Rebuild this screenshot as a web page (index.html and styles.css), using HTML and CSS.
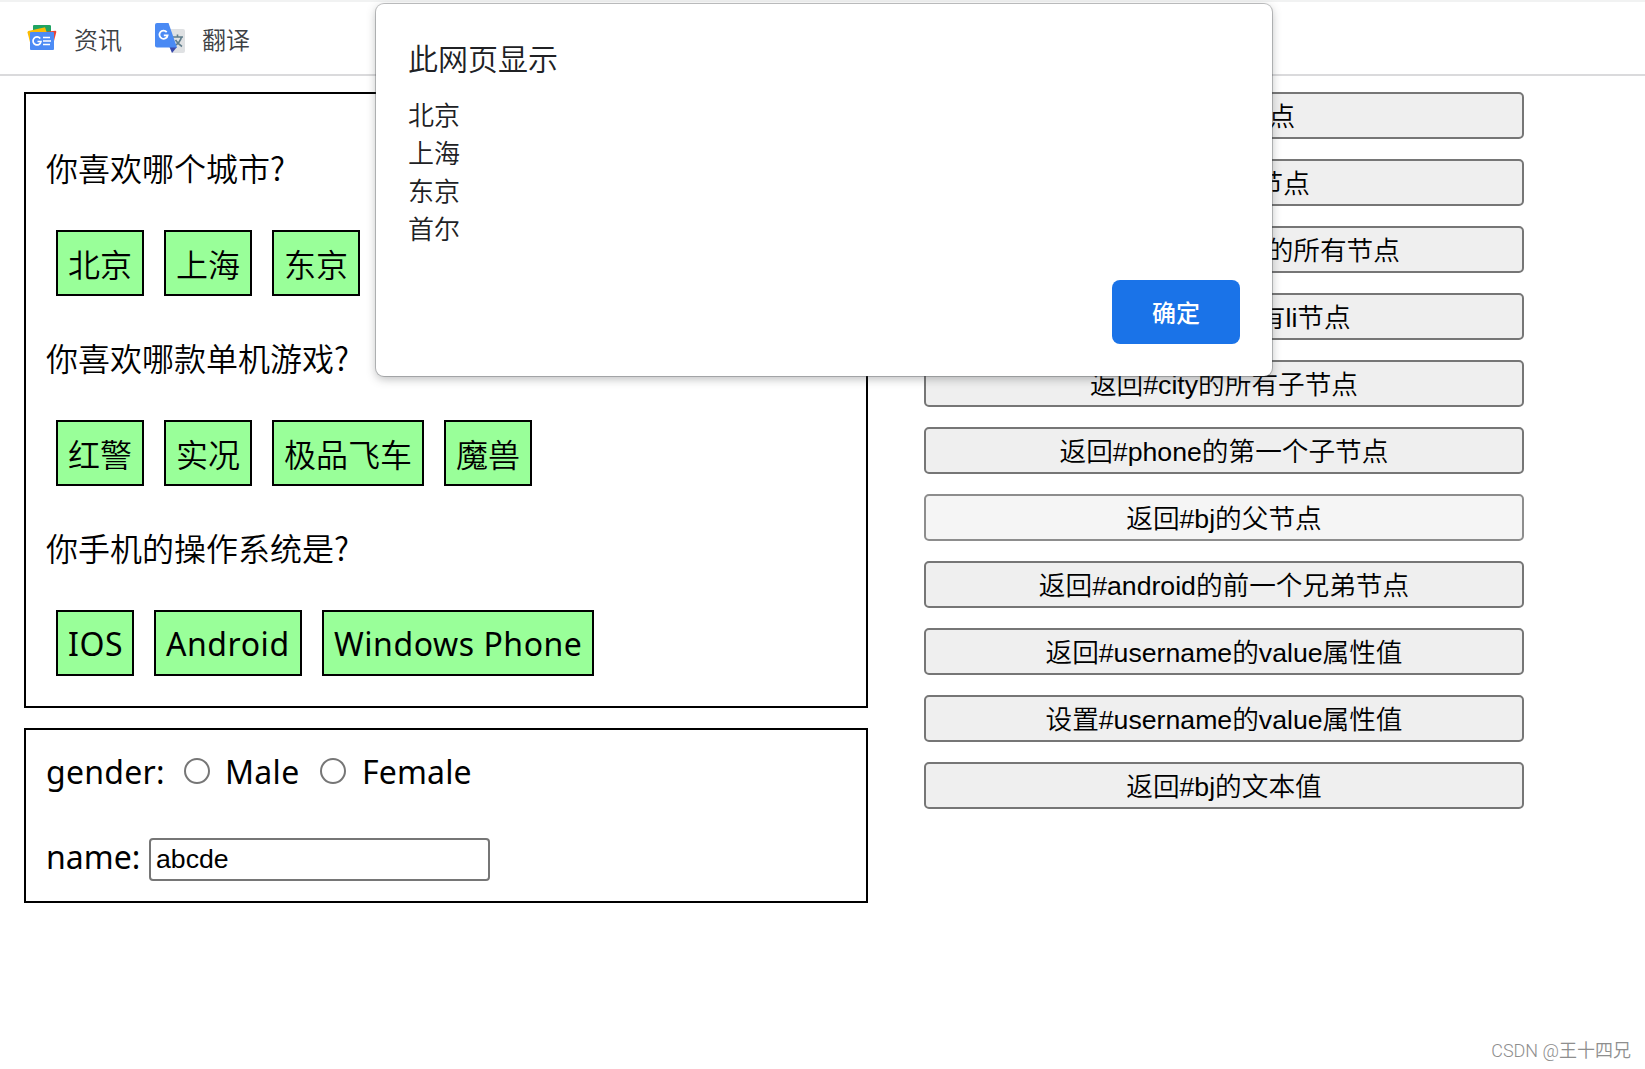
FILE: index.html
```html
<!DOCTYPE html>
<html lang="zh-CN">
<head>
<meta charset="utf-8">
<title>DOM 查询</title>
<link rel="stylesheet" href="styles.css">
</head>
<body>
<header class="bookmarks">
  <div class="bookmark">
    <svg class="icon-news" width="30" height="26" viewBox="0 0 30 26">
      <path d="M6 1Q6 0 7 0H22.500Q24 0 24 1V12H6Z" fill="#1fa463"/>
      <path d="M16 7L28.500 5.700Q29.500 6 29.300 7L26 20H16Z" fill="#ea4335"/>
      <path d="M.5 7.500Q.3 6.500 1.300 6L18 2.300 22 14 4 21Z" fill="#fbbc04"/>
      <rect x="3" y="7" width="24" height="18" rx="1" fill="#4c8bf5"/>
      <path d="M13.200 13.500A4 4 0 1 0 14 16.500H10.500" fill="none" stroke="#fff" stroke-width="1.700"/>
      <path d="M16 12.500H23M16 16H24M16 19.500H23" stroke="#fff" stroke-width="1.500"/>
    </svg>
    <span>资讯</span>
  </div>
  <div class="bookmark bookmark-translate">
    <svg class="icon-translate" width="30" height="30" viewBox="0 0 30 30">
      <path d="M12 6H28Q30 6 30 8V28Q30 30 28 30H17Z" fill="#dfe1e3"/>
      <path d="M18 14H28M22.500 11.500V14M26.500 14Q25 20 19 23M20.500 17Q23 21 27 23.500" fill="none" stroke="#607d8b" stroke-width="1.600"/>
      <path d="M14.500 24H22L17 30Z" fill="#3949ab"/>
      <path d="M2 0H13.500L22 24.500H2Q0 24.500 0 22.500V2Q0 0 2 0Z" fill="#4a8af4"/>
      <path d="M11.700 9.100A4.100 4.100 0 1 0 12.600 12.300H8.800" fill="none" stroke="#fff" stroke-width="1.800"/>
    </svg>
    <span>翻译</span>
  </div>
</header>
<main class="page">
  <div class="left">
    <section class="panel questions">
      <p class="question">你喜欢哪个城市?</p>
      <ul class="chips">
        <li>北京</li><li>上海</li><li>东京</li><li>首尔</li>
      </ul>
      <p class="question">你喜欢哪款单机游戏?</p>
      <ul class="chips">
        <li>红警</li><li>实况</li><li>极品飞车</li><li>魔兽</li>
      </ul>
      <p class="question">你手机的操作系统是?</p>
      <ul class="chips latin">
        <li class="ios">IOS</li><li class="android">Android</li><li class="winphone">Windows Phone</li>
      </ul>
    </section>
    <section class="panel form latin">
      <div class="row">
        <span class="label-gender">gender:</span>
        <input class="radio" type="radio" name="gender"><span class="label-male">Male</span>
        <input class="radio" type="radio" name="gender"><span class="label-female">Female</span>
      </div>
      <div class="row row-name">
        <span class="label-name">name:</span>
        <input class="text" type="text" value="abcde">
      </div>
    </section>
  </div>
  <div class="actions">
    <button>查找#bj节点</button>
    <button>查找所有li节点</button>
    <button>查找name=gender的所有节点</button>
    <button>查找#city下所有li节点</button>
    <button>返回#city的所有子节点</button>
    <button>返回#phone的第一个子节点</button>
    <button class="active">返回#bj的父节点</button>
    <button>返回#android的前一个兄弟节点</button>
    <button>返回#username的value属性值</button>
    <button>设置#username的value属性值</button>
    <button>返回#bj的文本值</button>
  </div>
</main>
<div class="dialog">
  <h1>此网页显示</h1>
  <div class="message">北京<br>上海<br>东京<br>首尔</div>
  <button class="confirm">确定</button>
</div>
<div class="watermark">CSDN @王十四兄</div>
</body>
</html>
```
FILE: styles.css
```css
* { box-sizing: border-box; }
body {
  margin: 0;
  height: 1069px;
  position: relative;
  overflow: hidden;
  background: #fff;
  color: #000;
  font-family: "Noto Sans CJK SC", sans-serif;
  font-size: 32px;
  font-weight: 350;
}
.bookmarks {
  height: 76px;
  border-top: 2px solid #f1f2f2;
  border-bottom: 2px solid #dadadc;
  display: flex;
  align-items: center;
  padding-left: 27px;
  color: #3c4043;
  font-size: 24px;
  line-height: 36px;
}
.bookmark { display: flex; align-items: center; gap: 17px; }
.bookmark-translate { margin-left: 33px; }
.bookmark span { padding-top: 2px; }
.page { display: flex; gap: 56px; padding: 16px 0 0 24px; }
.left { width: 844px; }
.panel { border: 2px solid #000; }
.questions { height: 616px; padding: 52px 20px 0; }
.question { margin: 0 0 42px; height: 42px; line-height: 42px; white-space: nowrap; }
.chips { display: flex; gap: 20px; margin: 0 0 40px; padding: 0 0 0 10px; list-style: none; }
.chips li {
  height: 66px;
  padding: 0 10px;
  border: 2px solid #000;
  background: #9f9;
  line-height: 62px;
  white-space: nowrap;
}
.latin { font-family: "Noto Sans", "Open Sans", sans-serif; font-weight: 400; }
.chips.latin li { line-height: 64px; letter-spacing: .55px; }
.chips .ios { width: 78px; }
.chips .android { width: 148px; }
.chips .winphone { width: 272px; }
.form { height: 175px; margin-top: 20px; padding: 20px 20px 0; }
.row { display: flex; align-items: center; height: 43px; line-height: 43px; white-space: nowrap; }
.row-name { margin-top: 45px; }
.label-gender { width: 138px; letter-spacing: .25px; }
.radio {
  appearance: none;
  width: 26px;
  height: 26px;
  margin: 0 0 2px;
  border: 2px solid #767676;
  border-radius: 50%;
  background: #fff;
}
.label-male { width: 95px; margin-left: 15px; letter-spacing: .3px; }
.label-female { margin-left: 16px; letter-spacing: .15px; }
.label-name { width: 103px; padding-bottom: 7px; }
.text {
  width: 341px;
  height: 43px;
  padding: 0 5px 1px;
  border: 2px solid #767676;
  border-radius: 4px;
  font: 26.67px "Liberation Sans", sans-serif;
}
.actions { width: 600px; display: flex; flex-direction: column; gap: 20px; }
.actions button {
  height: 47px;
  padding: 2px 0 0;
  border: 2px solid #767676;
  border-radius: 5px;
  background: #efefef;
  color: #000;
  font: 350 26.67px/38px "Liberation Sans", "Noto Sans CJK SC", sans-serif;
  white-space: nowrap;
}
.actions .active { background: #f5f5f5; border-color: #8d8d8d; }
.dialog {
  position: absolute;
  left: 376px;
  top: 4px;
  width: 896px;
  height: 372px;
  padding: 31px 32px 32px;
  display: flex;
  flex-direction: column;
  border-radius: 8px;
  background: #fff;
  box-shadow: 0 0 0 1px rgba(60, 64, 67, .3), 0 3px 10px rgba(60, 64, 67, .35);
  color: #202124;
}
.dialog h1 { margin: 0; font-size: 30px; line-height: 44px; font-weight: 350; }
.message { margin-top: 16px; font-size: 26px; line-height: 38px; }
.confirm {
  width: 128px;
  height: 64px;
  margin-top: auto;
  align-self: flex-end;
  padding: 0 0 1px;
  border: 0;
  border-radius: 8px;
  background: #1a73e8;
  color: #fff;
  font: 500 24px "Noto Sans CJK SC", sans-serif;
}
.watermark {
  position: absolute;
  right: 14px;
  bottom: 5px;
  color: #8e8e8e;
  font: 350 18px/26px Roboto, "Noto Sans CJK SC", sans-serif;
}
```
